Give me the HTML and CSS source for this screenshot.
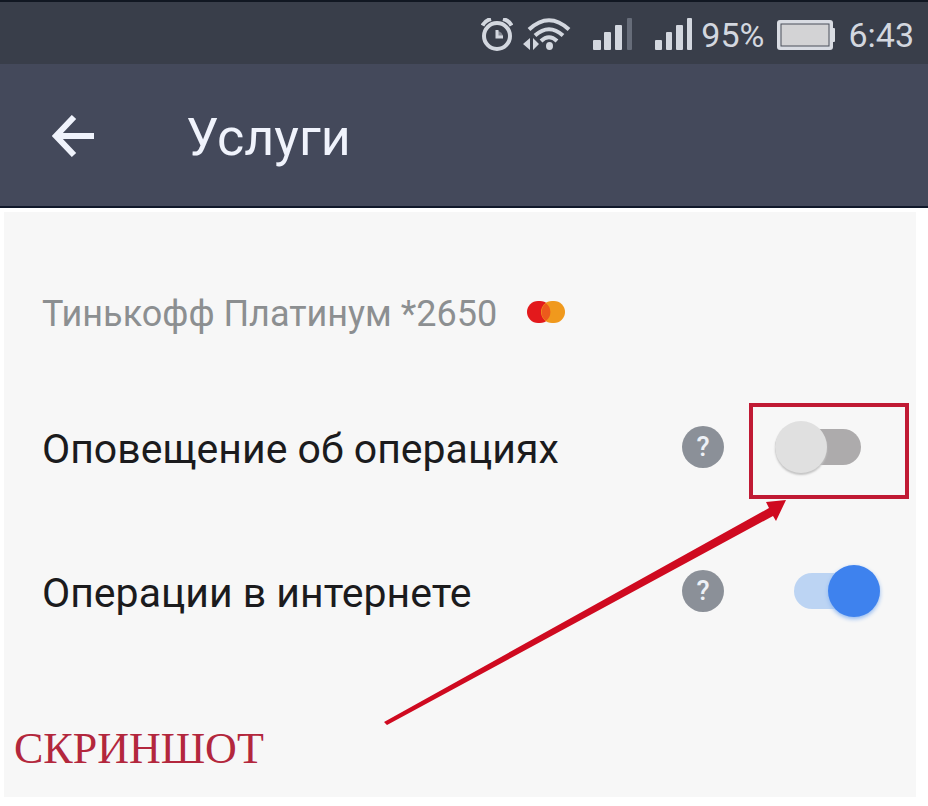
FILE: index.html
```html
<!DOCTYPE html>
<html lang="ru">
<head>
    <meta charset="UTF-8">
    <meta name="viewport" content="width=device-width, initial-scale=1.0">
    <title>Услуги</title>
    <link rel="stylesheet" href="styles.css">
</head>
<body>
    <div class="status-bar">
        <svg class="alarm" width="32" height="34" viewBox="0 0 32 34" fill="none" stroke="#d3d7df" stroke-width="3">
            <circle cx="16" cy="18" r="13" stroke-width="4"/>
            <path d="M1.500 7.500Q4 2.500 10 1M30.500 7.500Q28 2.500 22 1" stroke-width="4"/>
            <path d="M16 12v7h6"/>
            <path d="M16 13v6h6a6 6 0 0 0-6-6z" fill="#d3d7df" stroke="none" opacity=".5"/>
        </svg>
        <svg class="wifi" width="48" height="34" viewBox="0 0 48 34" fill="none" stroke="#d3d7df" stroke-width="4">
            <path d="M6 11.500Q26-7 46 11.500M12 17.500Q26 5 40 17.500M18 23Q26 15.500 34 23"/>
            <ellipse cx="26.500" cy="28" rx="3.500" ry="4" fill="#d3d7df" stroke="none"/>
            <path d="M0 26l7-6v12zM16 26l-6-6v12z" fill="#d3d7df" stroke="none"/>
        </svg>
        <svg class="signal" width="40" height="34" viewBox="0 0 40 34" fill="#d3d7df">
            <rect x="0" y="22" width="8" height="10" rx="1"/>
            <rect x="11" y="14" width="7" height="18" rx="1"/>
            <rect x="22" y="7" width="7" height="25" rx="1"/>
            <rect x="34" y="0" width="5" height="32" rx="1" fill="#666c79"/>
        </svg>
        <svg class="signal" width="38" height="34" viewBox="0 0 38 34" fill="#d3d7df">
            <rect x="0" y="22" width="7" height="10" rx="1"/>
            <rect x="11" y="14" width="6" height="18" rx="1"/>
            <rect x="21" y="7" width="7" height="25" rx="1"/>
            <rect x="32" y="0" width="5" height="32" rx="1"/>
        </svg>
        <span class="percent">95%</span>
        <svg class="battery" width="58" height="30" viewBox="0 0 58 30">
            <rect width="56" height="30" rx="3" fill="#d9dce3"/>
            <rect x="54" y="8" width="4" height="14" rx="1" fill="#d9dce3"/>
            <rect x="4" y="4" width="48" height="22" fill="#d3d3d5" stroke="#4a4f5a"/>
        </svg>
        <time>6:43</time>
    </div>

    <header>
        <button class="back" type="button" aria-label="Назад">
            <svg width="44" height="44" viewBox="0 0 44 44" fill="none" stroke="#f0f3fc" stroke-width="6">
                <path d="M22 2L4 21l18 19M4 21h38"/>
            </svg>
        </button>
        <h1>Услуги</h1>
    </header>

    <main>
        <div class="panel">
            <h2 class="card-name">
                <span>Тинькофф Платинум *2650</span>
                <svg width="38" height="24" viewBox="0 0 38 24">
                    <rect x="0" y="1" width="24" height="22" rx="11" fill="#e3191c"/>
                    <rect x="14" y="1" width="24" height="22" rx="11" fill="#f0991d"/>
                    <path d="M19 3.200a11 11 0 0 1 0 17.600 11 11 0 0 1 0-17.600z" fill="#ec5a1c"/>
                </svg>
            </h2>

            <div class="service">
                <label for="alerts">Оповещение об операциях</label>
                <button class="help" type="button">?</button>
                <div class="control highlight">
                    <input class="switch" type="checkbox" id="alerts">
                    <svg class="arrow" width="406" height="228" viewBox="0 0 406 228">
                        <path d="M3 223L388 9l-3-6 20-2-10 21-3-5L6 226z" fill="#cf0a20"/>
                    </svg>
                </div>
            </div>

            <div class="service">
                <label for="internet">Операции в интернете</label>
                <button class="help" type="button">?</button>
                <div class="control">
                    <input class="switch" type="checkbox" id="internet" checked>
                </div>
            </div>

            <p class="caption">СКРИНШОТ</p>
        </div>
    </main>
</body>
</html>
```

FILE: styles.css
```css
* {
    box-sizing: border-box;
}
body {
    margin: 0;
    background: #fff;
    font-family: Roboto, sans-serif;
    color: #1b1b1d;
}
button {
    padding: 0;
    border: none;
    cursor: pointer;
}
svg {
    flex: none;
}

/* Status bar */
.status-bar {
    display: flex;
    align-items: center;
    justify-content: flex-end;
    height: 64px;
    padding: 4px 14px 0 0;
    border-top: 2px solid #111722;
    background: #393e4a;
    color: #d3d7df;
    font-size: 34px;
}
.wifi {
    margin-left: 10px;
}
.signal {
    margin-left: 22px;
}
.percent {
    margin-left: 8px;
}
.battery {
    margin: 0 13px 0 13px;
}

/* Header */
header {
    display: flex;
    align-items: center;
    height: 144px;
    padding: 4px 52px 0 52px;
    border-bottom: 2px solid #10182a;
    background: #44495b;
}
.back {
    display: flex;
    width: 44px;
    background: none;
}
h1 {
    margin: 0 0 0 90px;
    color: #f0f3fc;
    font-size: 52px;
    font-weight: 400;
}

/* Services */
main {
    padding: 4px 12px 8px 4px;
}
.panel {
    padding: 70px 0 24px 38px;
    background: #f7f7f7;
}
.card-name {
    display: flex;
    align-items: center;
    gap: 30px;
    height: 60px;
    margin: 0 0 33px;
    color: #8c8f91;
    font-size: 36px;
    font-weight: 400;
}
.card-name span,
.service label {
    padding-top: 4px;
}
.service {
    display: flex;
    align-items: center;
    height: 144px;
    padding-right: 7px;
}
.service label {
    flex: 1;
    font-size: 41px;
}
.help {
    width: 42px;
    height: 42px;
    margin-right: 25px;
    border-radius: 50%;
    background: #8b9098;
    color: #eef1f6;
    font: 500 27px Roboto, sans-serif;
}
.control {
    position: relative;
    display: flex;
    align-items: center;
    justify-content: flex-end;
    width: 160px;
    height: 96px;
    padding-right: 29px;
}
.highlight {
    justify-content: flex-start;
    margin-top: 8px;
    padding: 0 0 8px 22px;
    border: 4px solid #c01a34;
}
.switch {
    position: relative;
    appearance: none;
    width: 86px;
    height: 52px;
    margin: 0;
    cursor: pointer;
}
.switch::before {
    content: "";
    position: absolute;
    inset: 8px 0;
    border-radius: 18px;
    background: #adabac;
}
.switch::after {
    content: "";
    position: absolute;
    top: 0;
    left: 0;
    width: 52px;
    height: 52px;
    border-radius: 50%;
    background: #e0e0e0;
    box-shadow: 0 2px 2px #c4c4c4;
}
.switch:checked::before {
    background: #bcd4f3;
}
.switch:checked::after {
    left: auto;
    right: 0;
    background: #3e82ee;
    box-shadow: 0 2px 4px #8fb8f2;
}
.arrow {
    position: absolute;
    top: calc(100% + 4px);
    right: 118px;
    pointer-events: none;
}
.caption {
    margin: 62px 0 0 -28px;
    color: #b3273d;
    font-family: "Liberation Serif", serif;
    font-size: 44px;
    line-height: 48px;
}
```
